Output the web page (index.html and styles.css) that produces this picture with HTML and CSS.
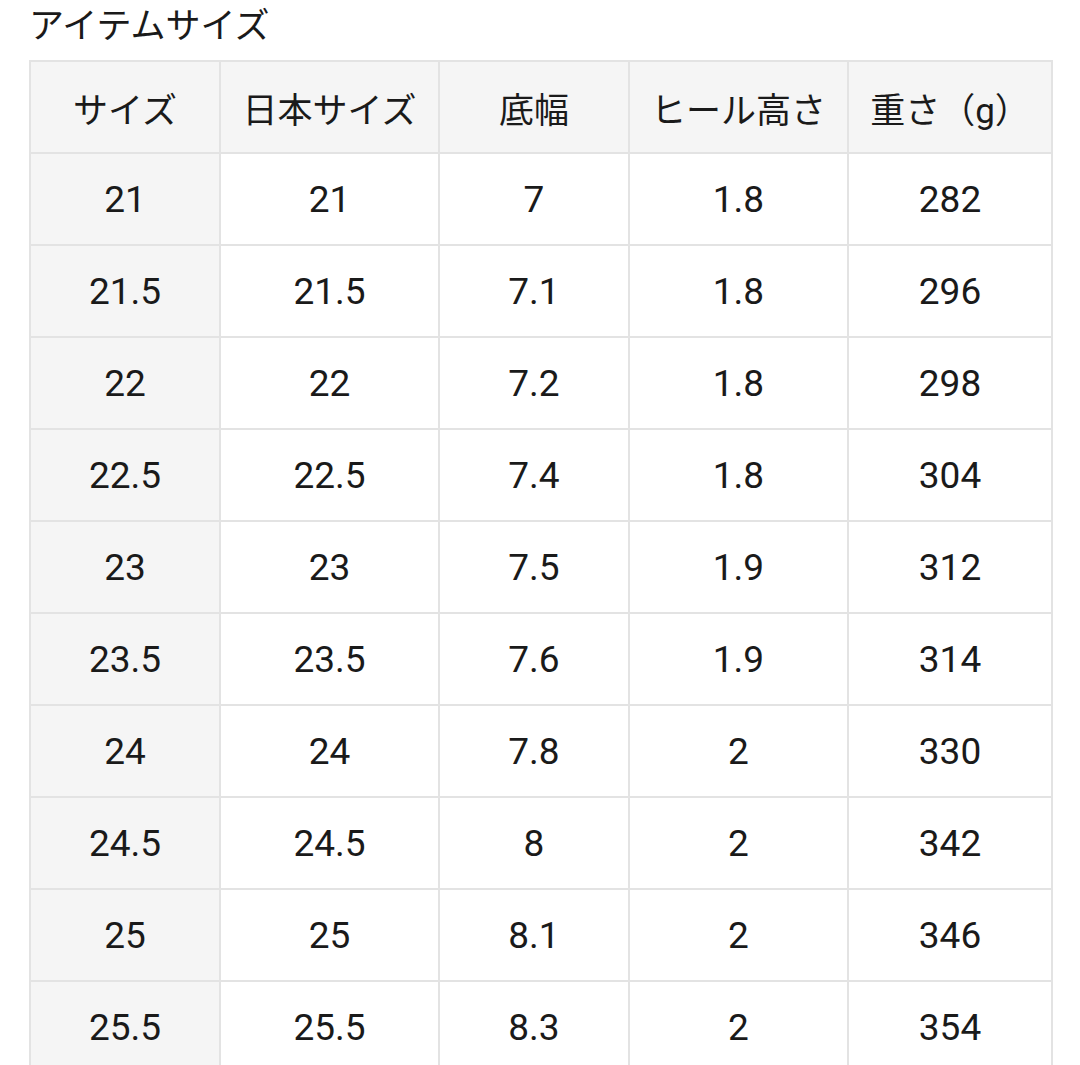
FILE: index.html
```html
<!DOCTYPE html>
<html lang="ja">
<head>
<meta charset="utf-8">
<link rel="stylesheet" href="styles.css">
</head>
<body>
<h2 class="title">アイテムサイズ</h2>
<table class="size-table">
  <colgroup>
    <col class="c1"><col class="c2"><col class="c3"><col class="c4"><col class="c5">
  </colgroup>
  <thead>
    <tr><th>サイズ</th><th>日本サイズ</th><th>底幅</th><th>ヒール高さ</th><th>重さ（g）</th></tr>
  </thead>
  <tbody>
    <tr><th>21</th><td>21</td><td>7</td><td>1.8</td><td>282</td></tr>
    <tr><th>21.5</th><td>21.5</td><td>7.1</td><td>1.8</td><td>296</td></tr>
    <tr><th>22</th><td>22</td><td>7.2</td><td>1.8</td><td>298</td></tr>
    <tr><th>22.5</th><td>22.5</td><td>7.4</td><td>1.8</td><td>304</td></tr>
    <tr><th>23</th><td>23</td><td>7.5</td><td>1.9</td><td>312</td></tr>
    <tr><th>23.5</th><td>23.5</td><td>7.6</td><td>1.9</td><td>314</td></tr>
    <tr><th>24</th><td>24</td><td>7.8</td><td>2</td><td>330</td></tr>
    <tr><th>24.5</th><td>24.5</td><td>8</td><td>2</td><td>342</td></tr>
    <tr><th>25</th><td>25</td><td>8.1</td><td>2</td><td>346</td></tr>
    <tr><th>25.5</th><td>25.5</td><td>8.3</td><td>2</td><td>354</td></tr>
  </tbody>
</table>
</body>
</html>
```
FILE: styles.css
```css
html, body {
  margin: 0;
  padding: 0;
  background: #ffffff;
}
body {
  font-family: Roboto, "Noto Sans CJK JP", sans-serif;
  color: #1a1a1a;
  padding: 0 0 0 29px;
}
.title {
  margin: 0;
  padding: 5px 0 0 0;
  height: 54px;
  box-sizing: border-box;
  font-size: 35px;
  font-weight: 400;
  line-height: 44px;
  color: #1a1a1a;
  font-family: Roboto, "Noto Sans CJK JP", sans-serif;
}
.size-table {
  border-collapse: collapse;
  table-layout: fixed;
  width: 1022px;
  margin-top: 6px;
}
.c1 { width: 190px; }
.c2 { width: 219px; }
.c3 { width: 190px; }
.c4 { width: 219px; }
.c5 { width: 204px; }
.size-table th,
.size-table td {
  border: 2px solid #e3e3e3;
  height: 90px;
  padding: 0;
  text-align: center;
  vertical-align: middle;
  font-weight: 400;
  font-size: 37px;
  color: #1a1a1a;
}
.size-table thead th {
  background: #f5f5f5;
  font-size: 35px;
}
.size-table tbody th {
  background: #f5f5f5;
}
```
